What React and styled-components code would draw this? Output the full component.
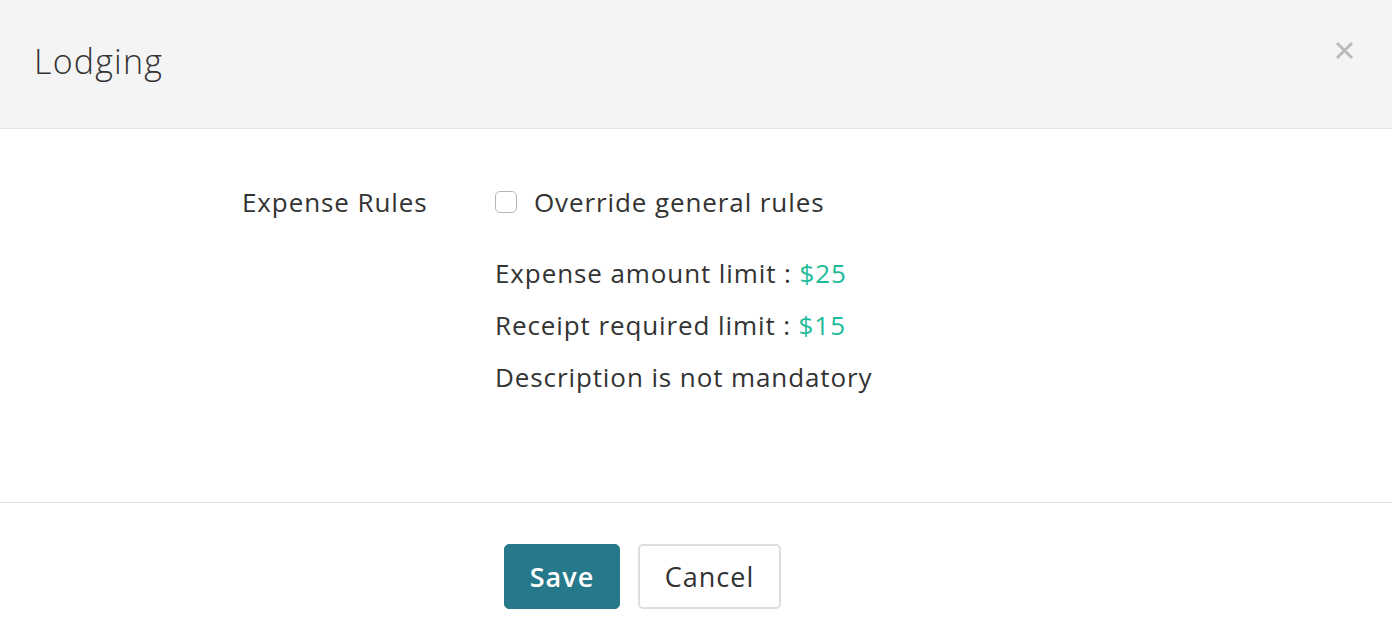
import React from "react";
import styled, { createGlobalStyle } from "styled-components";

const GlobalStyle = createGlobalStyle`
  html, body {
    margin: 0;
    padding: 0;
    background: #fff;
  }
  body {
    font-family: "Open Sans", Lato, Arial, sans-serif;
    color: #333;
  }
`;

// Modal shell
const Modal = styled.div`
  width: 1392px;
  height: 642px;
  display: flex;
  flex-direction: column;
  background: #fff;
`;

const Header = styled.div`
  height: 128px;
  background: #f4f4f4;
  border-bottom: 1px solid #e3e3e3;
  display: flex;
  align-items: center;
  justify-content: space-between;
  padding: 0 38px 0 34px;
  box-sizing: content-box;
`;

const Title = styled.h2`
  margin: 0;
  font-size: 34px;
  font-weight: 300;
  letter-spacing: 1.2px;
  color: #333;
  margin-top: -6px;
`;

const CloseButton = styled.button`
  border: none;
  background: none;
  padding: 0;
  margin-top: -28px;
  cursor: pointer;
  display: flex;
  color: #bbb;
`;

const Body = styled.div`
  padding: 47px 0 0 242px;
  height: 326px;
  border-bottom: 1px solid #e3e3e3;
`;

const FormRow = styled.div`
  display: grid;
  grid-template-columns: 253px 1fr;
  font-size: 26px;
  letter-spacing: 0.9px;
  line-height: 52px;
`;

const Label = styled.div`
  color: #333;
`;

const Field = styled.div`
  display: flex;
  flex-direction: column;
`;

const CheckLabel = styled.label`
  display: flex;
  align-items: center;
  gap: 17px;
  cursor: pointer;
`;

const Checkbox = styled.span`
  width: 20px;
  height: 20px;
  border: 1.5px solid #b5b5b5;
  border-radius: 5px;
  background: #fff;
  display: inline-block;
`;

const Rules = styled.div`
  margin-top: 19px;
`;

const Rule = styled.div`
  color: #333;
`;

const Amount = styled.span`
  color: #1dbb9a;
  font-weight: 500;
`;

const Footer = styled.div`
  display: flex;
  gap: 18px;
  padding: 41px 0 0 504px;
`;

const Button = styled.button`
  height: 65px;
  border-radius: 5px;
  font-family: "Open Sans", Lato, Arial, sans-serif;
  font-size: 27px;
  letter-spacing: 1px;
  cursor: pointer;
  padding: 0;
  width: ${(p) => p.width}px;
  background: ${(p) => (p.primary ? "#25798a" : "#fff")};
  color: ${(p) => (p.primary ? "#fff" : "#333")};
  border: ${(p) => (p.primary ? "1px solid #25798a" : "2px solid #dedede")};
  font-weight: ${(p) => (p.primary ? 600 : 400)};
`;

const App = () => (
  <>
    <GlobalStyle />
    <Modal>
      <Header>
        <Title>Lodging</Title>
        <CloseButton aria-label="Close">
          <svg width="19" height="19" viewBox="0 0 19 19">
            <path
              d="M2 2 L17 17 M17 2 L2 17"
              stroke="currentColor"
              strokeWidth="3"
              strokeLinecap="butt"
            />
          </svg>
        </CloseButton>
      </Header>
      <Body>
        <FormRow>
          <Label>Expense Rules</Label>
          <Field>
            <CheckLabel>
              <Checkbox />
              Override general rules
            </CheckLabel>
            <Rules>
              <Rule>
                Expense amount limit : <Amount>$25</Amount>
              </Rule>
              <Rule>
                Receipt required limit : <Amount>$15</Amount>
              </Rule>
              <Rule>Description is not mandatory</Rule>
            </Rules>
          </Field>
        </FormRow>
      </Body>
      <Footer>
        <Button primary width={116}>
          Save
        </Button>
        <Button width={143}>Cancel</Button>
      </Footer>
    </Modal>
  </>
);

export default App;
